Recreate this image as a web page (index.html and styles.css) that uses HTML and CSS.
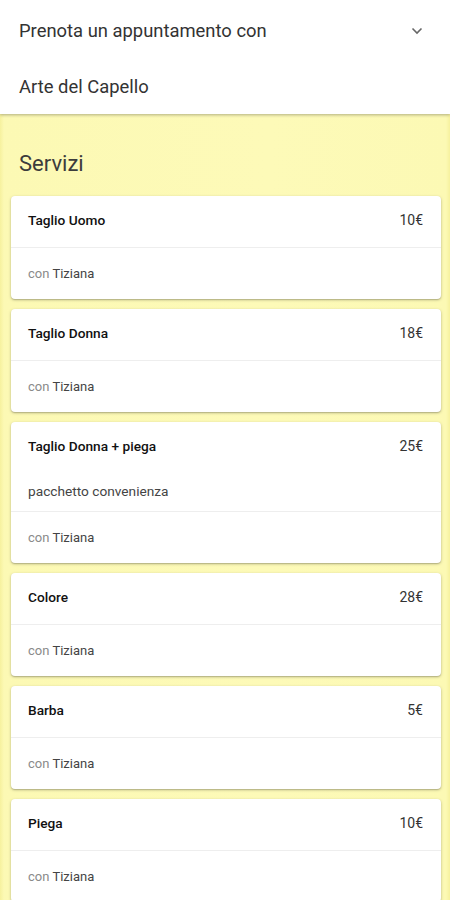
FILE: index.html
```html
<!DOCTYPE html>
<html lang="it">
<head>
<meta charset="utf-8">
<title>Prenota</title>
<link rel="stylesheet" href="styles.css">
</head>
<body>
<header class="header">
  <div class="row select">
    <span>Prenota un appuntamento con</span>
    <svg class="chev" width="12" height="8" viewBox="0 0 12 8"><path d="M1.5 1.5 L6 6 L10.5 1.5" fill="none" stroke="#666" stroke-width="1.6"/></svg>
  </div>
  <div class="row name-row">Arte del Capello</div>
</header>
<main class="main">
  <h2 class="section-title">Servizi</h2>
  <div class="list">
    <div class="card">
      <div class="card-head"><div class="line"><span class="name">Taglio Uomo</span><span class="price">10€</span></div></div>
      <div class="card-foot"><span class="con">con</span> <span class="who">Tiziana</span></div>
    </div>
    <div class="card">
      <div class="card-head"><div class="line"><span class="name">Taglio Donna</span><span class="price">18€</span></div></div>
      <div class="card-foot"><span class="con">con</span> <span class="who">Tiziana</span></div>
    </div>
    <div class="card">
      <div class="card-head"><div class="line"><span class="name">Taglio Donna + piega</span><span class="price">25€</span></div><div class="desc">pacchetto convenienza</div></div>
      <div class="card-foot"><span class="con">con</span> <span class="who">Tiziana</span></div>
    </div>
    <div class="card">
      <div class="card-head"><div class="line"><span class="name">Colore</span><span class="price">28€</span></div></div>
      <div class="card-foot"><span class="con">con</span> <span class="who">Tiziana</span></div>
    </div>
    <div class="card">
      <div class="card-head"><div class="line"><span class="name">Barba</span><span class="price">5€</span></div></div>
      <div class="card-foot"><span class="con">con</span> <span class="who">Tiziana</span></div>
    </div>
    <div class="card">
      <div class="card-head"><div class="line"><span class="name">Piega</span><span class="price">10€</span></div></div>
      <div class="card-foot"><span class="con">con</span> <span class="who">Tiziana</span></div>
    </div>
  </div>
</main>
</body>
</html>
```
FILE: styles.css
```css
* { box-sizing: border-box; }
html, body { margin: 0; padding: 0; }
body {
  font-family: Roboto, "Noto Sans", "Liberation Sans", sans-serif;
  background: #fcf9b4;
  color: #222;
}
.header {
  background: #fff;
  box-shadow: 0 1px 3px rgba(0,0,0,0.3);
  position: relative;
  z-index: 1;
}
.row {
  height: 57px;
  display: flex;
  align-items: center;
  padding: 0 19px;
  font-size: 18.4px;
  color: #333;
}
.select { justify-content: space-between; padding-top: 4px; }
.select .chev { margin-right: 8px; }
.name-row { padding-top: 2px; }
.main {
  padding: 0 9px 20px 11px;
  background: linear-gradient(90deg, #f6f19e 0, #fcf9b4 4px, #fdfab8 60%, #fcf9b4 calc(100% - 4px), #f6f19e 100%);
  min-height: 800px;
}
.section-title {
  margin: 0;
  padding: 37px 0 0 8px;
  height: 82px;
  font-size: 22px;
  font-weight: 400;
  color: #3c3c3c;
}
.list { display: flex; flex-direction: column; gap: 10px; }
.card {
  background: #fff;
  border-radius: 4px;
  box-shadow: 0 1px 3px rgba(0,0,0,0.25), 0 1px 1px rgba(0,0,0,0.12);
}
.card-head {
  padding: 15px 18px 18px 17px;
  border-bottom: 1px solid #eeeeee;
}
.line {
  display: flex;
  justify-content: space-between;
  align-items: center;
  height: 18px;
}
.name { font-size: 13.7px; font-weight: 500; color: #111; }
.price { font-size: 14px; color: #333; }
.desc {
  margin: 27px 0 -7px;
  height: 18px;
  line-height: 18px;
  font-size: 13.7px;
  color: #444;
}
.card-foot {
  padding: 17px 17px 16px;
  height: 51px;
  line-height: 18px;
  font-size: 13px;
}
.con { color: #8a8a8a; }
.who { color: #444; }
```
